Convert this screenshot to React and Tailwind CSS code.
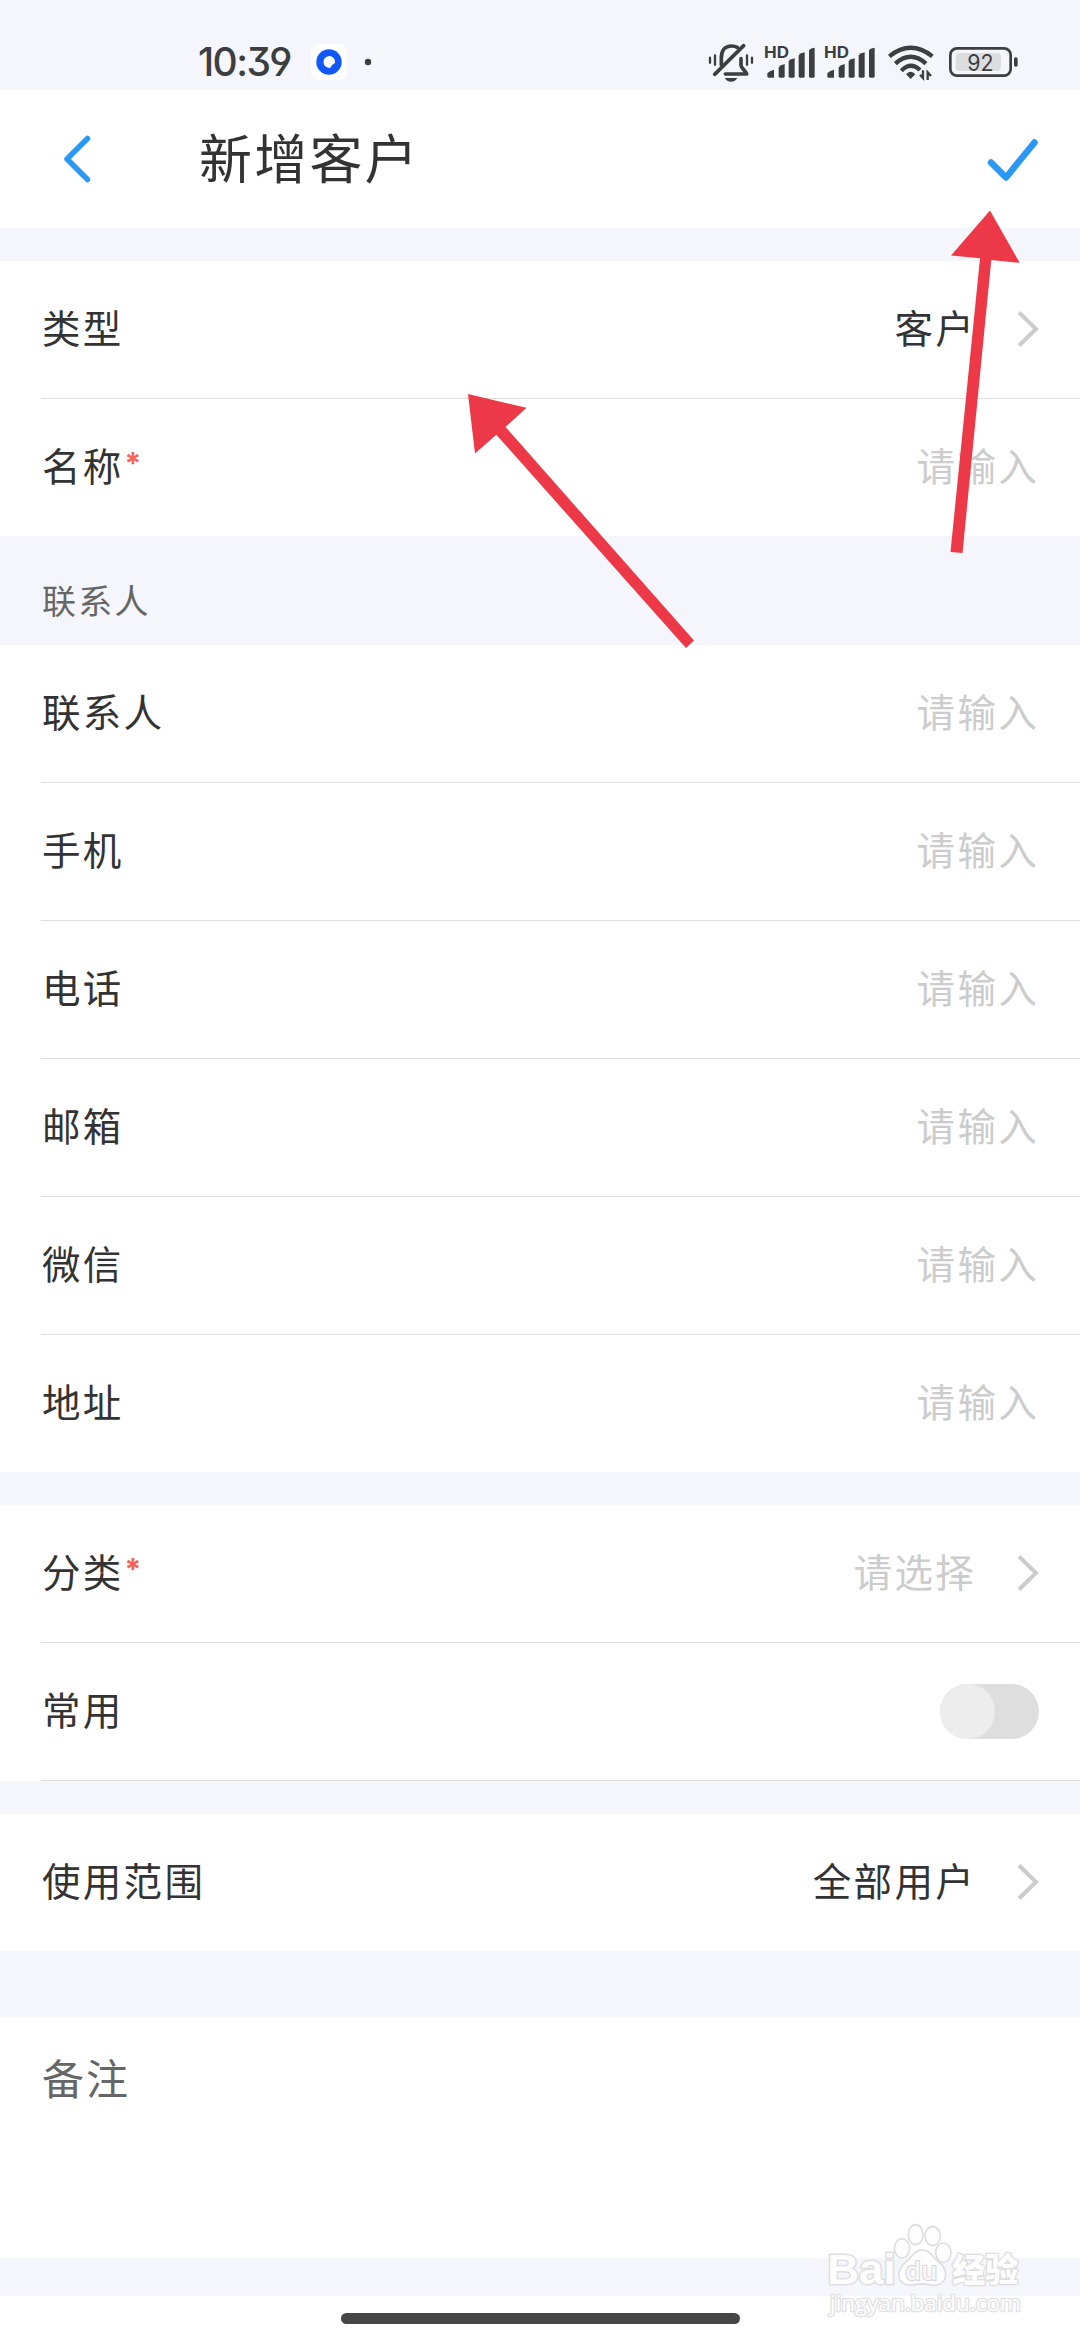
import React, { useState } from "react";

const contactFields = ["联系人", "手机", "电话", "邮箱", "微信", "地址"];

function StatusIcons() {
  return (
    <svg className="h-[70px] w-[360px]" viewBox="0 0 1080 210" fill="none">
      {/* muted bell */}
      <g stroke="#3d3e40" strokeWidth="11" strokeLinecap="round" strokeLinejoin="round">
        <path d="M94 104 V84 C94 60 106 48 124 48 C131 48 137 49 142 52" />
        <path d="M153 86 V104 C153 114 166 122 170 132 H106" />
        <path d="M161 47 L74 133" />
        <path d="M60 83 V98 M75 76 V104 M171 76 V104 M186 83 V98" strokeWidth="7" />
      </g>
      <path d="M104 144 H142 Q136 155 123 155 Q110 155 104 144 Z" fill="#3d3e40" />

      {/* two sim cards */}
      {[0, 180].map((x) => (
        <g key={x} transform={`translate(${x} 0)`} fill="#3d3e40">
          <text x="222" y="84" fontSize="47" fontWeight="700" fontFamily="Inter, sans-serif" textLength="75" lengthAdjust="spacingAndGlyphs">
            HD
          </text>
          <path d="M232 130 Q240 121 252 119 V143 H236 Q232 143 232 139 Z" />
          <path d="M266 112 Q272 105 284 102 V139 Q284 143 280 143 H270 Q266 143 266 139 Z" />
          <path d="M296 93 Q302 87 314 85 V139 Q314 143 310 143 H300 Q296 143 296 139 Z" />
          <path d="M326 76 Q332 69 344 67 V139 Q344 143 340 143 H330 Q326 143 326 139 Z" />
          <path d="M357 60 Q362 54 374 53 V139 Q374 143 370 143 H361 Q357 143 357 139 Z" />
        </g>
      ))}

      {/* wifi */}
      <g stroke="#3d3e40" strokeWidth="13">
        <path d="M598 79 Q662 28 727 79" />
        <path d="M616 101 Q662 60 708 101" />
        <path d="M634 122 Q662 94 690 120" />
      </g>
      <path d="M651 133 Q662 122 673 133 L662 144 Z" fill="#3d3e40" stroke="#3d3e40" strokeWidth="4" strokeLinejoin="round" />
      <path d="M690 134 L699 144 V121 M713 150 V127 L723 138" stroke="#3d3e40" strokeWidth="7" />

      {/* battery */}
      <rect x="797" y="69" width="136" height="54" rx="12" fill="#dcdde0" />
      <rect x="781" y="55" width="181" height="82" rx="20" stroke="#3d3e40" strokeWidth="8" />
      <rect x="972" y="82" width="11" height="28" rx="5" fill="#3d3e40" />
      <text x="832" y="122" fontSize="69" fontFamily="Inter, sans-serif" fill="#3d3e40" textLength="79" lengthAdjust="spacingAndGlyphs">
        92
      </text>
    </svg>
  );
}

function StatusBar() {
  return (
    <div className="flex h-[90px] items-start pt-[30px] pr-[30px] pl-[198px]">
      <span className="w-[113px] text-[39px] leading-[64px] font-medium tracking-[-1.6px] text-[#3d3e40] [font-feature-settings:'cv09','ss01']">
        10:39
      </span>
      <svg className="mt-[4px] h-[56px] w-[70px]" viewBox="0 0 70 56">
        <rect x="0" y="10" width="36" height="36" rx="8" fill="#fff" />
        <circle cx="18" cy="28" r="12.7" fill="#1257fb" />
        <path d="M18 22 A6 6 0 1 0 19 34 Q20 31 24 29 A6 6 0 0 0 18 22 Z" fill="#fff" />
        <circle cx="57" cy="28" r="3.2" fill="#3d3e40" />
      </svg>
      <div className="ml-auto">
        <StatusIcons />
      </div>
    </div>
  );
}

function Header() {
  return (
    <header className="flex h-[138px] items-center bg-white pr-[41px] pl-[62px]">
      <button className="w-[137px]">
        <svg className="h-[50px] w-[32px]" viewBox="0 0 32 50" fill="none">
          <path d="M25.5 4.5 L5 25 L25.5 45.5" stroke="#2b98f3" strokeWidth="5.5" strokeLinecap="round" strokeLinejoin="round" />
        </svg>
      </button>
      <h1 className="pt-[2px] text-[53px] leading-none tracking-[2.2px]">新增客户</h1>
      <button className="ml-auto">
        <svg className="h-[50px] w-[54px]" viewBox="0 0 54 50" fill="none">
          <path d="M6 28.5 L21 43.5 L49.5 8.5" stroke="#2b98f3" strokeWidth="6.5" strokeLinecap="round" strokeLinejoin="round" />
        </svg>
      </button>
    </header>
  );
}

function Chevron() {
  return (
    <svg className="ml-[41px] h-[40px] w-[22px]" viewBox="0 0 22 40" fill="none">
      <path d="M2 2.5 L19 19 L2 35.5" stroke="#ccc" strokeWidth="4" />
    </svg>
  );
}

function Row({ label, required, line = true, children }) {
  return (
    <div className="pl-[41px]">
      <div className={line ? "border-b border-[#dedede]" : ""}>
        <div className="flex h-[137px] items-center pr-[41px] pl-[1px] text-[38.5px] tracking-[2.3px]">
          <span className="pt-[1px]">{label}</span>
          {required && <span className="-mt-[8px] ml-[1px] text-[30px] font-bold text-[#f5635a]">*</span>}
          <div className="ml-auto flex items-center">{children}</div>
        </div>
      </div>
    </div>
  );
}

function Placeholder({ text }) {
  return <span className="pt-[1px] text-[#ccc]">{text}</span>;
}

function Arrows() {
  return (
    <svg className="pointer-events-none absolute top-0 left-0 h-[700px] w-[1080px]" viewBox="0 0 1080 700" fill="#ed3947">
      <path d="M468 394 L526.5 407.8 L505.5 427 L694 640.5 L686 648 L496.3 434.7 L475 453.5 Z" />
      <path d="M990 210.5 L1019.7 262.8 L991.3 260 L962.5 553 L950.5 552 L980 258.3 L951 255.5 Z" />
    </svg>
  );
}

function Watermark() {
  return (
    <svg
      className="pointer-events-none absolute top-[2200px] left-[780px] h-[140px] w-[300px]"
      viewBox="0 0 900 420"
      fill="#fdfdfe"
      stroke="#dedee0"
      strokeWidth="5"
      strokeLinejoin="round"
    >
      <text x="142" y="252" fontSize="130" fontWeight="700" fontFamily="Liberation Sans, sans-serif" textLength="205" lengthAdjust="spacingAndGlyphs" strokeWidth="9" paintOrder="stroke">
        Bai
      </text>
      <ellipse cx="366" cy="145" rx="23" ry="29" />
      <ellipse cx="407" cy="104" rx="22" ry="30" />
      <ellipse cx="458" cy="108" rx="23" ry="29" />
      <ellipse cx="490" cy="158" rx="23" ry="29" />
      <path d="M427 150 C450 150 458 172 474 184 C492 198 501 212 496 232 C490 254 468 258 448 254 C434 251 420 251 406 254 C386 258 362 254 357 232 C353 212 363 198 379 184 C395 171 404 150 427 150 Z" />
      <text x="376" y="240" fontSize="78" fontWeight="600" fontFamily="Open Sans, sans-serif" textLength="96" lengthAdjust="spacingAndGlyphs" fill="#f7f7f9" stroke="#d4d4d6" strokeWidth="6" paintOrder="stroke">
        du
      </text>
      <text x="517" y="245" fontSize="99" fontWeight="900" fontFamily="Noto Sans CJK SC, sans-serif" textLength="198" strokeWidth="8" paintOrder="stroke">
        经验
      </text>
      <text x="150" y="332" fontSize="64" fontFamily="Open Sans, sans-serif" textLength="572" lengthAdjust="spacingAndGlyphs" stroke="#e2e2e4" strokeWidth="8" paintOrder="stroke">
        jingyan.baidu.com
      </text>
    </svg>
  );
}

function App() {
  const [common, setCommon] = useState(false);

  return (
    <div className="relative h-[2340px] w-[1080px] overflow-hidden bg-[#f5f6fb] font-['Inter','Noto_Sans_CJK_SC',sans-serif] text-[#333]">
      <StatusBar />
      <Header />

      <section className="mt-[33px] bg-white">
        <Row label="类型">
          <span className="pt-[1px]">客户</span>
          <Chevron />
        </Row>
        <Row label="名称" required line={false}>
          <Placeholder text="请输入" />
        </Row>
      </section>

      <h2 className="flex h-[109px] items-center pt-[22px] pl-[42px] text-[34px] tracking-[2.2px] text-[#666]">联系人</h2>

      <section className="bg-white">
        {contactFields.map((field, index) => (
          <Row key={field} label={field} line={index < contactFields.length - 1}>
            <Placeholder text="请输入" />
          </Row>
        ))}
      </section>

      <section className="mt-[33px] bg-white">
        <Row label="分类" required>
          <Placeholder text="请选择" />
          <Chevron />
        </Row>
        <Row label="常用">
          <button
            onClick={() => setCommon(!common)}
            className={`flex h-[55px] w-[99px] rounded-full bg-[#dedede] ${common ? "justify-end" : "justify-start"}`}
          >
            <span className="h-[55px] w-[55px] rounded-full bg-[#ededed]" />
          </button>
        </Row>
      </section>

      <section className="mt-[33px] bg-white">
        <Row label="使用范围" line={false}>
          <span className="pt-[1px]">全部用户</span>
          <Chevron />
        </Row>
      </section>

      <section className="mt-[66px] h-[241px] bg-white pt-[31px] pl-[42px] text-[42px] leading-[64px] tracking-[2px] text-[#666]">
        备注
      </section>

      <div className="mt-[38px] flex h-[44px] justify-center bg-white pt-[17px]">
        <div className="h-[11px] w-[399px] rounded-full bg-[#464646]" />
      </div>

      <Arrows />
      <Watermark />
    </div>
  );
}

export default App;
